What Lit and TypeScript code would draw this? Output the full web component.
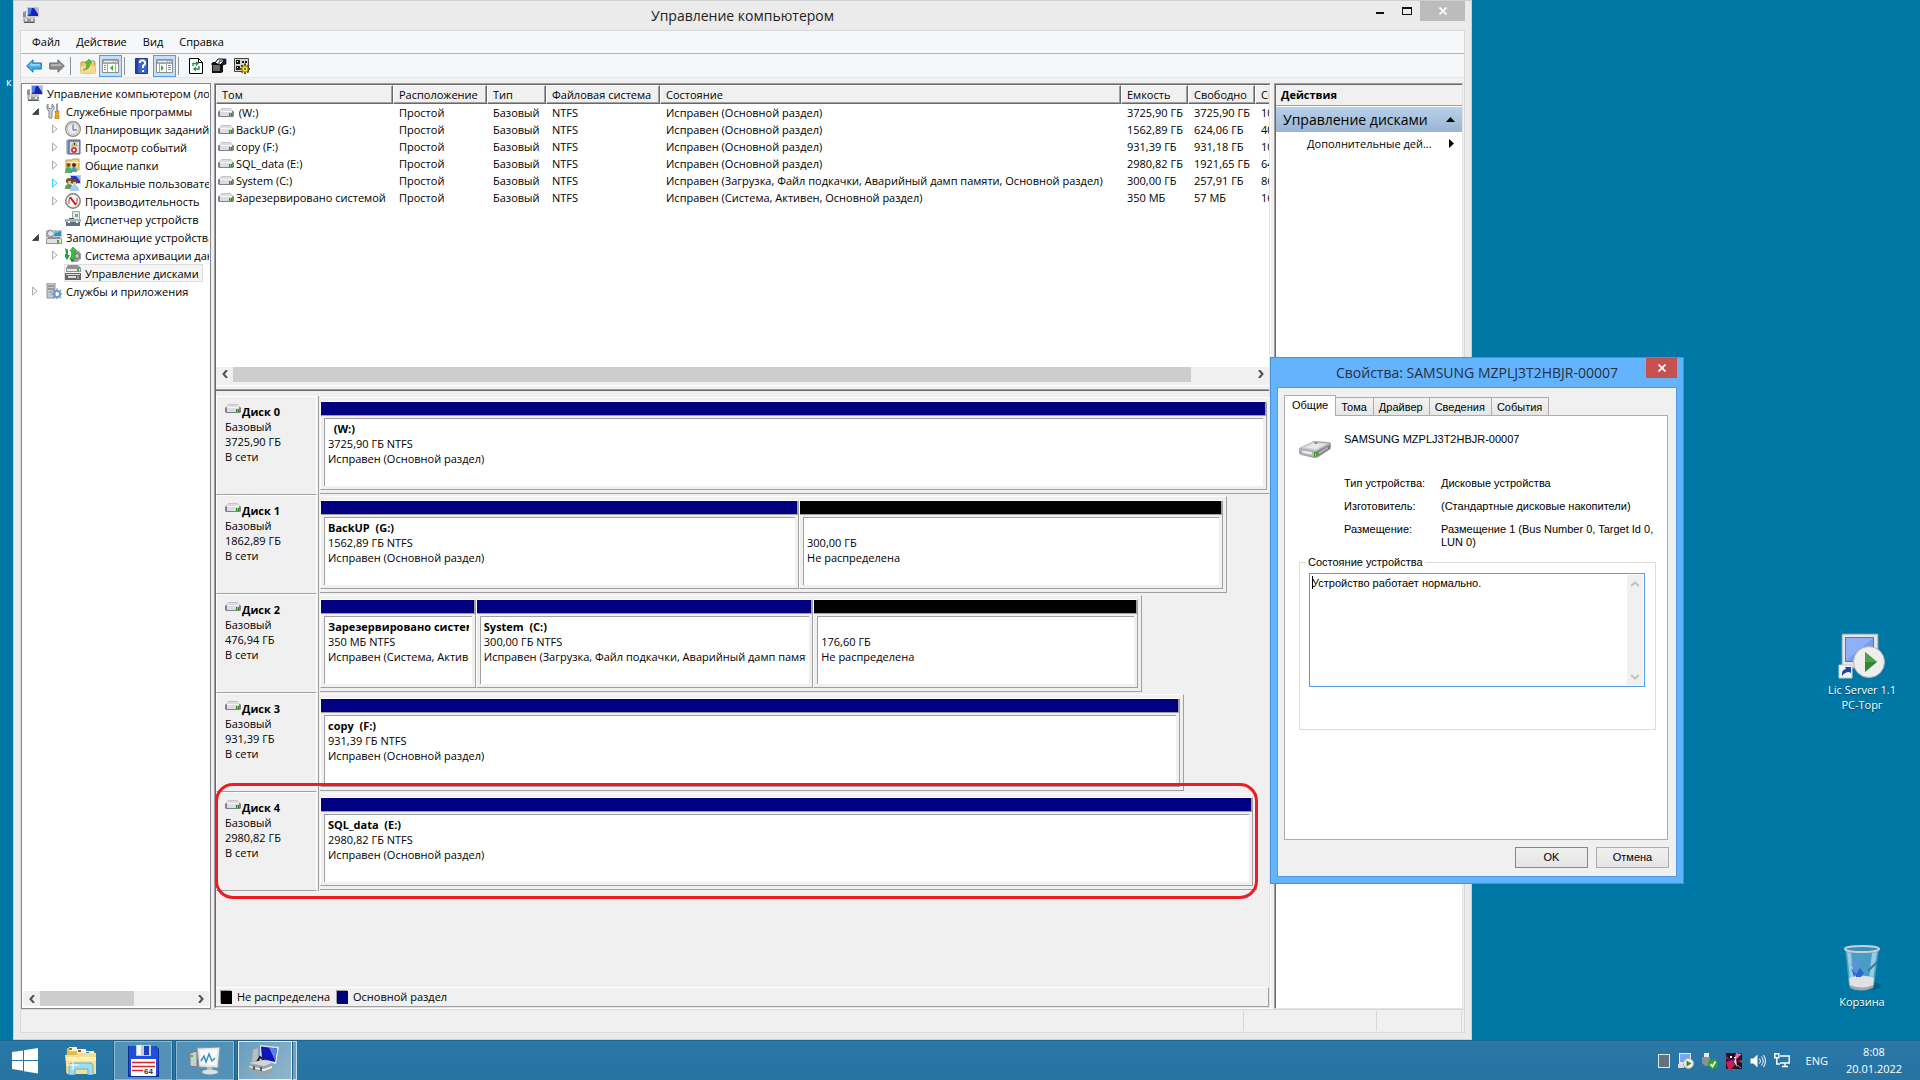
import { LitElement, html, css, TemplateResult } from "lit";
import { customElement, property } from "lit/decorators.js";

const UI_FONT = css`"Open Sans", "Noto Sans", sans-serif`;

const base = css`
  * { box-sizing: border-box; }
  button, textarea { font: inherit; color: inherit; margin: 0; padding: 0; border: 0; background: none; border-radius: 0; }
  ul, ol, dl, dd, h1, h2, p { margin: 0; padding: 0; list-style: none; font-weight: normal; font-size: inherit; }
  svg { display: block; flex: none; }
`;

/* ---------- tree and list icons ---------- */
const iComputer = html`<svg width="16" height="16" viewBox="0 0 16 16"><path d="M4 0h12v10H4z" fill="#c9c9c0"/><path d="M5 1h10v8H5z" fill="#1822b8"/><path d="M5 1h4L7 9H5z" fill="#4f7be8"/><path d="M11 1h4v6z" fill="#a9b8f4"/><path d="M0 5l3-1v7H0z" fill="#8b9096"/><path d="M1 6h1v1H1z" fill="#5fd13c"/><path d="M4 9l3-2 2 2z" fill="#3b3f45"/><path d="M0 10h12v6H1z" fill="#8e979e"/><path d="M0 10h12v2H0z" fill="#bfc6ca"/><path d="M2 12h2v2H2zM8 12h2v2H8z" fill="#e9ecee"/><path d="M1 15h10v1H1z" fill="#565d63"/></svg>`;
const iTools = html`<svg width="16" height="16" viewBox="0 0 16 16"><path d="M2 1v4l2 1 2-1V1l2 2v3L6 8v7H3V8L1 6V3z" fill="#d3d6d9" stroke="#7f868c"/><path d="M10 1l2-1v8h-2z" fill="#9aa0a6"/><path d="M9 8h4v2l-1 1 1 1v4H9v-4l1-1-1-1z" fill="#f0a31c" stroke="#b8730a" stroke-width=".6"/></svg>`;
const iClock = html`<svg width="16" height="16" viewBox="0 0 16 16"><circle cx="8" cy="8" r="7.4" fill="#e9e4d8" stroke="#8e8d88" stroke-width="1.2"/><circle cx="8" cy="8" r="5.6" fill="#e3ecf8" stroke="#c7c1ae"/><path d="M8 3.5V9h4" fill="none" stroke="#4b5f86"/></svg>`;
const iEvents = html`<svg width="16" height="16" viewBox="0 0 16 16"><path d="M3 1h12v14H3z" fill="#6f8fc4" stroke="#4a669b"/><path d="M5 3h9v11H5z" fill="#d7dfee"/><path d="M1 2h3M1 4h3M1 6h3M1 8h3M1 10h3M1 12h3M1 14h3" stroke="#7d8795"/><path d="M9.500 2l3 5h-6z" fill="#f7c52b" stroke="#b28410" stroke-width=".5"/><path d="M9.500 4v2" stroke="#333"/><circle cx="9" cy="11" r="3" fill="#da3a35"/><path d="M8 10l2 2m0-2l-2 2" stroke="#fff"/></svg>`;
const iFolders = html`<svg width="16" height="16" viewBox="0 0 16 16"><path d="M1 3h6l1-1h6v11H1z" fill="#f0d37c" stroke="#c19c3f"/><path d="M2 5h12v1H2z" fill="#fdf2c2"/><path d="M0 16q0-6 3.500-6T7 16z" fill="#4fb06b"/><circle cx="3.500" cy="8" r="2" fill="#7d4d25"/><path d="M6 15q0-5 3-5t3 5z" fill="#4c9fc4"/><circle cx="9" cy="8" r="2" fill="#3d3430"/></svg>`;
const iUsers = html`<svg width="16" height="16" viewBox="0 0 16 16"><path d="M5 0h11v9H5z" fill="#c9ccd0"/><path d="M6 1h9v7H6z" fill="#2337c8"/><path d="M11 1h4v5z" fill="#98b0f2"/><circle cx="4" cy="6" r="3" fill="#7b5430"/><path d="M3 6h3v3H3z" fill="#e8b98c"/><circle cx="9.500" cy="6.500" r="2.800" fill="#6b4a2e"/><path d="M8 7h3v3H8z" fill="#edc39a"/><path d="M0 14q0-5 4-5t4 5z" fill="#58a05a"/><path d="M5 16q0-6 4.500-6T14 16z" fill="#a9c9ec"/></svg>`;
const iPerf = html`<svg width="16" height="16" viewBox="0 0 16 16"><circle cx="8" cy="8" r="7.200" fill="#f4f4f4" stroke="#7f8183" stroke-width="1.500"/><path d="M4 11V6l2-2M12 5v5l-2 2" stroke="#c5393a" fill="none"/><path d="M5 4l6 8" stroke="#d2191b" stroke-width="2"/></svg>`;
const iDevice = html`<svg width="16" height="16" viewBox="0 0 16 16"><path d="M7.500.500h7v9h-7z" fill="#e6e8ea" stroke="#9ea4aa"/><path d="M10 3h3v3h-3z" fill="#79ad6d"/><path d="M0 8h16v3H0z" fill="#a9b0b6"/><path d="M1 11h14v4H1z" fill="#5d7382"/><path d="M4 7h5v1H4z" fill="#525a60"/><path d="M3 10h2v2H3zM11 10h2v2h-2z" fill="#eef1f3"/></svg>`;
const iStorage = html`<svg width="16" height="16" viewBox="0 0 16 16"><path d="M0 2q4-3 8 0v6H0z" fill="#a7a9ac"/><circle cx="4.500" cy="4.500" r="3" fill="#e6e7e9" stroke="#8b8e92"/><path d="M7 1h9v7H7z" fill="#c4c7ca"/><path d="M8 2h7v5H8z" fill="#2b93c5"/><path d="M8 2h7L8 5z" fill="#6cc3e8"/><path d="M0 10l2-2h12l2 2v5H0z" fill="#8f9194"/><path d="M1 10h14v4H1z" fill="#dfe0e2"/><path d="M11 11h2v3h-2z" fill="#39b01c"/></svg>`;
const iBackup = html`<svg width="16" height="16" viewBox="0 0 16 16"><path d="M6 4h8l2 3v5l-4 3H6z" fill="#9b9ea2"/><circle cx="12" cy="9" r="2.500" fill="#d7c4ba" stroke="#666"/><path d="M0 1l3 2v5h2l-3 5-2-3V7h1z" fill="#25a433"/><path d="M8 0l4 4h-2v6l-2 4-3-3 2-2V4H5z" fill="#3cc33e" stroke="#1b7d29" stroke-width=".5"/><path d="M4 11l3 4 3-2" fill="#3b7c49"/></svg>`;
const iDiskMgmt = html`<svg width="16" height="16" viewBox="0 0 16 16"><path d="M3 0h10l3 3v4H1V3z" fill="#8f9295"/><path d="M2 4h13v2H2z" fill="#e6e6e2"/><path d="M12 4h2v2h-2z" fill="#37b01f"/><path d="M0 8h16v7H0z" fill="#63676b"/><path d="M1 9h14v1H1z" fill="#d5d8da"/><path d="M3 11h8v2H3z" fill="#d9dbdd"/><path d="M12 11h2v3h-2z" fill="#97999b"/></svg>`;
const iServices = html`<svg width="16" height="16" viewBox="0 0 16 16"><path d="M1 0h8v15H1z" fill="#c4c9cf" stroke="#8d949c"/><path d="M2 3h6M2 6h6" stroke="#646d77"/><path d="M3 9h3" stroke="#52b34c"/><circle cx="11" cy="11" r="3" fill="none" stroke="#6d9ccb" stroke-width="2"/><path d="M11 5.500v2m0 7v2M5.500 11h2m7 0h2M7 7l1.500 1.500m5 5L15 15M15 7l-1.500 1.500M7 15l1.500-1.500" stroke="#6d9ccb" stroke-width="1.500"/></svg>`;
const iDrive = html`<svg width="16" height="10" viewBox="0 0 16 10"><path d="M2 1h12l2 3H0z" fill="#dcdcdf"/><path d="M3 0h10v1H3z" fill="#c4c4c8"/><path d="M0 4l1-1h14l1 1v4l-1 1H1L0 8z" fill="#808287"/><path d="M2 4h12v4H2z" fill="#dcdce8"/><path d="M2 3h12v1H2z" fill="#f7f7f9"/><path d="M11 5h3v3h-3z" fill="#2f8a1b"/><path d="M12 5h1v3h-1z" fill="#5fe03a"/></svg>`;

/* ---------- tool bar icons ---------- */
const tBack = html`<svg width="16" height="14" viewBox="0 0 16 14"><path d="M.700 7L7 .8V4h8.300v6H7v3.200z" fill="#42b0ea" stroke="#1f6fae"/><path d="M3 7l3-3.500V5h8v1.500z" fill="#8fd8fb"/></svg>`;
const tFwd = html`<svg width="16" height="14" viewBox="0 0 16 14"><path d="M15.300 7L9 .8V4H.700v6H9v3.200z" fill="#8d8d8d" stroke="#6a6a6a"/><path d="M2 5h8V3.500L13 7H2z" fill="#b3b3b3"/></svg>`;
const tUp = html`<svg width="16" height="16" viewBox="0 0 16 16"><path d="M1 4h6l1-1h6l1 1v11H1z" fill="#ecc66a" stroke="#c19a41"/><path d="M9 4h4v1H9z" fill="#fff"/><path d="M1 8h14v7H1z" fill="#f5d98d"/><path d="M3 12q4-1 4-7H5l4-4 3 4h-2q0 7-7 7z" fill="#55c13b" stroke="#3a8f28" stroke-width=".5"/></svg>`;
const tPaneL = html`<svg width="17" height="14" viewBox="0 0 17 14"><path d="M.500.500h16v13H.500z" fill="#fff" stroke="#8d9093"/><path d="M1 1h15v3H1z" fill="#a9acaf"/><path d="M2 2.500h9M12 2.500h1M14 2.500h1" stroke="#f2f2f2"/><path d="M1 4.500h15M5.500 5v8M13.500 5v8" stroke="#a4a7aa"/><path d="M2 6.500h2M2 8.500h2M2 10.500h2" stroke="#6d9bd0"/><path d="M11 6v6L8 9z" fill="#43b02a"/></svg>`;
const tPaneR = html`<svg width="17" height="14" viewBox="0 0 17 14"><path d="M.500.500h16v13H.500z" fill="#fff" stroke="#8d9093"/><path d="M1 1h15v3H1z" fill="#a9acaf"/><path d="M2 2.500h9M12 2.500h1M14 2.500h1" stroke="#f2f2f2"/><path d="M1 4.500h15M3.500 5v8M10.500 5v8" stroke="#a4a7aa"/><path d="M12 6.500h3M12 8.500h3M12 10.500h3" stroke="#8b8e91"/><path d="M5 6v6l3-3z" fill="#43b02a"/></svg>`;
const tHelp = html`<svg width="14" height="16" viewBox="0 0 14 16"><path d="M.500.500h12v15H.500z" fill="#3d62c8" stroke="#1e3a8f"/><path d="M1 1h2v14H1z" fill="#24429f"/><path d="M5 5V3.500L6.500 2.500h2L10 4v2L8 8v2" fill="none" stroke="#fff" stroke-width="2"/><path d="M7 12h2v2H7z" fill="#fff"/></svg>`;
const tRefresh = html`<svg width="14" height="16" viewBox="0 0 14 16"><path d="M.500.500h9l4 4v11H.500z" fill="#fff" stroke="#000"/><path d="M9.500.500v4h4" fill="none" stroke="#000"/><path d="M4 8V5.500h4M10 8v3H6" fill="none" stroke="#169a3a" stroke-width="1.400"/><path d="M7 3l3 2.500L7 8zM7 8.500L4 11l3 2.500z" fill="#169a3a"/></svg>`;
const tProps = html`<svg width="16" height="16" viewBox="0 0 16 16"><path d="M0 6l2-2h9l1 2v8l-2 1H1V7z" fill="#111"/><path d="M2 8h7M2 10h7M2 12h7" stroke="#e9e9e9" stroke-width=".8"/><path d="M4 5l3-4h5l1 2-4 4z" fill="#fff" stroke="#000"/><path d="M12 1h3v5l-3 1z" fill="#20264e" stroke="#000" stroke-width=".6"/><path d="M8 3h3M7 5h2" stroke="#000"/></svg>`;
const tSettings = html`<svg width="16" height="16" viewBox="0 0 16 16"><path d="M.500.500h14v13H.500z" fill="#d5d5cf" stroke="#444"/><path d="M2 2h4v4H2zM2 8h4v4H2zM8 3h2v2H8zM11 3h2v2h-2zM7 7h2v2H7z" fill="#1d1d1d"/><path d="M3 3h1v1H3zM3 9h1v1H3z" fill="#fff"/><path d="M11 5.500v11M5.500 11h11M7.500 7.500l7 7M14.500 7.500l-7 7" stroke="#5c5200" stroke-width="2"/><circle cx="11" cy="11" r="3" fill="#f5e92c" stroke="#a89800"/><circle cx="11" cy="11" r="1" fill="#444"/></svg>`;

const chevL = html`<svg width="6" height="8" viewBox="0 0 6 8"><path d="M5 0L1.500 4 5 8" fill="none" stroke="#505050" stroke-width="2"/></svg>`;
const chevR = html`<svg width="6" height="8" viewBox="0 0 6 8"><path d="M1 0l3.500 4L1 8" fill="none" stroke="#505050" stroke-width="2"/></svg>`;

const triOpen = html`<svg width="7" height="7" viewBox="0 0 7 7"><path d="M6.500.500v6h-6z" fill="#404040" stroke="#1c1c1c" stroke-width=".6"/></svg>`;
const triShut = (hot: boolean) => html`<svg width="6" height="10" viewBox="0 0 6 10"><path d="M.600 1l4.300 4L.600 9z" fill="#fff" stroke="${hot ? "#27c7f7" : "#a5a5a5"}"/></svg>`;

/* ---------- data ---------- */
const volumes = [
  [" (W:)", "Исправен (Основной раздел)", "3725,90 ГБ", "3725,90 ГБ", "100 %"],
  ["BackUP (G:)", "Исправен (Основной раздел)", "1562,89 ГБ", "624,06 ГБ", "40 %"],
  ["copy (F:)", "Исправен (Основной раздел)", "931,39 ГБ", "931,18 ГБ", "100 %"],
  ["SQL_data (E:)", "Исправен (Основной раздел)", "2980,82 ГБ", "1921,65 ГБ", "64 %"],
  ["System (C:)", "Исправен (Загрузка, Файл подкачки, Аварийный дамп памяти, Основной раздел)", "300,00 ГБ", "257,91 ГБ", "86 %"],
  ["Зарезервировано системой", "Исправен (Система, Активен, Основной раздел)", "350 МБ", "57 МБ", "16 %"],
];
const columns: [string, number][] = [["Том", 177], ["Расположение", 94], ["Тип", 59], ["Файловая система", 114], ["Состояние", 461], ["Емкость", 67], ["Свободно", 67], ["Свободно %", 80]];

interface Part { name: string; size: string; state: string; share: number; free?: boolean; }
interface Disk { name: string; size: string; extent: number; parts: Part[]; marked?: boolean; }
const OK_STATE = "Исправен (Основной раздел)";
const disks: Disk[] = [
  { name: "Диск 0", size: "3725,90 ГБ", extent: 100, parts: [{ name: "  (W:)", size: "3725,90 ГБ NTFS", state: OK_STATE, share: 1 }] },
  { name: "Диск 1", size: "1862,89 ГБ", extent: 95.5, parts: [
    { name: "BackUP  (G:)", size: "1562,89 ГБ NTFS", state: OK_STATE, share: 479 },
    { name: "", size: "300,00 ГБ", state: "Не распределена", share: 424, free: true }] },
  { name: "Диск 2", size: "476,94 ГБ", extent: 86.5, parts: [
    { name: "Зарезервировано системой", size: "350 МБ NTFS", state: "Исправен (Система, Активен, Основной раздел)", share: 155 },
    { name: "System  (C:)", size: "300,00 ГБ NTFS", state: "Исправен (Загрузка, Файл подкачки, Аварийный дамп памяти, Основной раздел)", share: 338 },
    { name: "", size: "176,60 ГБ", state: "Не распределена", share: 325, free: true }] },
  { name: "Диск 3", size: "931,39 ГБ", extent: 90.9, parts: [{ name: "copy  (F:)", size: "931,39 ГБ NTFS", state: OK_STATE, share: 1 }] },
  { name: "Диск 4", size: "2980,82 ГБ", extent: 98.6, marked: true, parts: [{ name: "SQL_data  (E:)", size: "2980,82 ГБ NTFS", state: OK_STATE, share: 1 }] },
];

interface Node { text: string; icon: TemplateResult; level: number; mark?: "open" | "shut" | "hot"; selected?: boolean; }
const tree: Node[] = [
  { text: "Управление компьютером (локальным)", icon: iComputer, level: 0 },
  { text: "Служебные программы", icon: iTools, level: 1, mark: "open" },
  { text: "Планировщик заданий", icon: iClock, level: 2, mark: "shut" },
  { text: "Просмотр событий", icon: iEvents, level: 2, mark: "shut" },
  { text: "Общие папки", icon: iFolders, level: 2, mark: "shut" },
  { text: "Локальные пользователи", icon: iUsers, level: 2, mark: "hot" },
  { text: "Производительность", icon: iPerf, level: 2, mark: "shut" },
  { text: "Диспетчер устройств", icon: iDevice, level: 2 },
  { text: "Запоминающие устройства", icon: iStorage, level: 1, mark: "open" },
  { text: "Система архивации данных", icon: iBackup, level: 2, mark: "shut" },
  { text: "Управление дисками", icon: iDiskMgmt, level: 2, selected: true },
  { text: "Службы и приложения", icon: iServices, level: 1, mark: "shut" },
];

/* ---------- horizontal scroll bar ---------- */
@customElement("h-scroll")
export class HScroll extends LitElement {
  @property({ type: Number }) size = 50;
  static styles = [base, css`
    :host { display: flex; flex: none; height: 15px; background: #f0f0f0; }
    button { width: 17px; display: grid; place-items: center; }
    .track { flex: 1; }
    .thumb { height: 100%; background: #cdcdcd; }
  `];
  render() {
    return html`<button aria-label="Прокрутить влево">${chevL}</button>
      <div class="track"><div class="thumb" style="width:${this.size}%"></div></div>
      <button aria-label="Прокрутить вправо">${chevR}</button>`;
  }
}

/* ---------- one disk with its partitions ---------- */
@customElement("disk-row")
export class DiskRow extends LitElement {
  @property({ attribute: false }) disk!: Disk;
  static styles = [base, css`
    :host { display: grid; grid-template-columns: 103px minmax(0, 1fr); position: relative; line-height: 15px; }
    .label { border: 1px solid #fff; border-bottom-color: #a0a0a0; padding: 7px 8px 0; margin-right: 1px; }
    .side { border-right: 1px solid #a0a0a0; display: grid; }
    .name { display: flex; align-items: flex-start; font-weight: bold; gap: 1px; }
    .graph { margin: 1px 0 1px 1px; border: 1px solid #a0a0a0; border-top-color: #fff; border-left: 0; padding: 3px 3px 3px 0; display: flex; }
    .graph.full { border-right-color: #f0f0f0; padding-right: 2px; }
    .part { flex-basis: 0; min-width: 0; border: 1px solid #a0a0a0; border-top-color: #fff; border-left-color: #fff; }
    .bar { height: 14px; background: #000080; border-bottom: 1px solid #a0a0a0; border-right: 1px solid #a0a0a0; }
    .free .bar { background: #000; }
    .body { padding: 2px 3px 3px; }
    .box { height: 68px; padding: 2px 3px 0; background: #fff; border-left: 1px solid #a0a0a0; border-top: 1px solid #a0a0a0; overflow: hidden; white-space: pre; }
    .box p { overflow: hidden; height: 15px; }
    .box .title { font-weight: bold; }
    .mark { position: absolute; left: -1px; top: -9px; right: 11px; bottom: -8px; border: 3px solid #ed1c24; border-radius: 18px; z-index: 2; pointer-events: none; }
  `];
  render() {
    const d = this.disk;
    return html`
      <div class="side"><div class="label">
        <div class="name">${iDrive}<span>${d.name}</span></div>
        <p>Базовый</p><p>${d.size}</p><p>В сети</p>
      </div></div>
      <div class="graph ${d.extent === 100 ? "full" : ""}" style="width:${d.extent}%">
        ${d.parts.map(p => html`<div class="part ${p.free ? "free" : ""}" style="flex-grow:${p.share}">
          <div class="bar"></div>
          <div class="body"><div class="box"><p class="title">${p.name}</p><p>${p.size}</p><p>${p.state}</p></div></div>
        </div>`)}
      </div>
      ${d.marked ? html`<div class="mark"></div>` : ""}`;
  }
}

/* ---------- management console window ---------- */
@customElement("console-window")
export class ConsoleWindow extends LitElement {
  static styles = [base, css`
    :host { display: flex; flex-direction: column; background: #ebebeb; border: 1px solid #ccd0d0; padding: 0 6px 6px; }
    .titlebar { display: grid; grid-template-columns: 1fr auto 1fr; height: 29px; }
    .titlebar h1 { font-size: 14px; line-height: 30px; color: #222; }
    .titlebar .icon { padding: 6px 3px; }
    .controls { display: flex; justify-content: flex-end; height: 20px; }
    .controls button { width: 27px; display: grid; place-items: center; }
    .controls .close { width: 45px; background: #bcbcbc; }
    .frame { flex: 1; min-height: 0; border: 1px solid #d9d9d9; background: #f0f0f0; display: flex; flex-direction: column; }
    .menu { display: flex; background: #f5f7f9; height: 23px; padding-left: 3px; border-bottom: 1px solid #b0b4b8; }
    .menu button { padding: 0 8px; line-height: 22px; }
    .tools { display: flex; background: #f5f7f9; height: 24px; padding: 1px 0 0 1px; border-bottom: 1px solid #e3e6ea; }
    .tools button { width: 23px; height: 22px; display: grid; place-items: center; }
    .tools button.on { background: #c4e0f9; border: 1px solid #569de5; }
    .sep { width: 1px; height: 18px; margin: 2px 5px 0 2px; background: #8c9196; }
    .panes { flex: 1; min-height: 0; display: grid; grid-template-columns: 190px minmax(0, 1fr) 189px; gap: 3px; padding: 5px 1px 0 0; }
    .tree { border: 1px solid #828790; background: #fff; display: flex; flex-direction: column; padding: 0 1px 2px; min-width: 0; }
    .tree ul { flex: 1; overflow: hidden; }
    .node { display: flex; align-items: center; height: 18px; white-space: nowrap; }
    .l0 { padding-left: 3px; } .l1 { padding-left: 9px; } .l2 { padding-left: 29px; }
    .arrow { width: 13px; flex: none; display: grid; }
    .l2 .arrow { width: 12px; }
    .cap { display: flex; align-items: center; gap: 4px; height: 18px; padding-right: 3px; border: 1px solid transparent; padding-left: 0; }
    .cap.sel { border-color: #dedede; background: #f5f5f5; }
    .mid { border: 1px solid #a0a0a0; border-right-color: #fff; border-bottom-color: #fff; display: flex; flex-direction: column; min-width: 0; }
    .inner { flex: 1; min-height: 0; display: flex; flex-direction: column; border-left: 1px solid #696969; border-top: 1px solid #696969; border-right: 1px solid #e3e3e3; border-bottom: 1px solid #e3e3e3; }
    .list { flex: 300 1 0; min-height: 0; display: flex; flex-direction: column; background: #f0f0f0; padding-bottom: 3px; }
    .rows { flex: 1; background: #fff; overflow: hidden; }
    table { border-collapse: separate; border-spacing: 0; table-layout: fixed; width: 1119px; white-space: nowrap; }
    th { font-weight: normal; text-align: left; padding: 0 0 0 5px; height: 19px; line-height: 16px; background: #f0f0f0; border: 1px solid #fff; border-right-color: #696969; border-bottom-color: #696969; box-shadow: inset -1px -1px #a0a0a0; }
    td { padding: 0 0 0 6px; height: 17px; line-height: 17px; overflow: hidden; }
    td:first-child { padding-left: 2px; }
    .vol { display: flex; align-items: center; gap: 2px; white-space: pre; }
    .split { height: 6px; flex: none; background: #f0f0f0; border-top: 1px solid #fff; border-bottom: 1px solid #696969; box-shadow: inset 0 -1px #a0a0a0; }
    .disks { flex: 598 1 0; min-height: 0; padding-top: 5px; }
    .legend { display: flex; align-items: center; height: 20px; flex: none; padding-left: 5px; gap: 5px; border-top: 1px solid #fff; border-bottom: 1px solid #a0a0a0; border-right: 1px solid #a0a0a0; line-height: 16px; }
    .sw { width: 11px; height: 13px; background: #000; box-shadow: -1px -1px #a0a0a0; }
    .sw.prim { background: #000080; margin-left: 2px; }
    .actions { border: 1px solid #a0a0a0; border-right-color: #e3e3e3; border-bottom-color: #e3e3e3; box-shadow: inset 1px 1px #696969; background: #fff; padding: 1px 0 0 1px; min-width: 0; }
    .actions h2 { font-weight: bold; background: #f0f0f0; line-height: 20px; height: 21px; padding: 0 5px; border-bottom: 1px solid #a0a0a0; }
    .group { display: flex; width: 100%; align-items: center; justify-content: space-between; height: 25px; margin-top: 1px; padding: 0 7px; background: linear-gradient(#b9d1ea, #99b4d3); font-size: 14px; }
    .more { display: flex; width: 100%; align-items: center; justify-content: space-between; height: 23px; padding: 0 8px 0 31px; white-space: nowrap; }
    .status { height: 23px; border-top: 1px solid #d7d7d7; display: flex; justify-content: flex-end; padding: 1px 2px; }
    .status span { border-right: 1px solid #d7d7d7; }
    .s1 { flex: 1; } .s2 { width: 133px; } .s3 { width: 85px; }
  `];
  render() {
    return html`
      <header class="titlebar">
        <span class="icon">${iComputer}</span>
        <h1>Управление компьютером</h1>
        <div class="controls">
          <button aria-label="Свернуть"><svg width="8" height="8" viewBox="0 0 8 8"><path d="M0 5h8v2H0z" fill="#111"/></svg></button>
          <button aria-label="Развернуть"><svg width="10" height="8" viewBox="0 0 10 8"><path d="M0 0h10v8H0zM1 2v5h8V2z" fill="#111" fill-rule="evenodd"/></svg></button>
          <button class="close" aria-label="Закрыть"><svg width="8" height="8" viewBox="0 0 8 8"><path d="M.500.500l7 7m0-7l-7 7" stroke="#fff" stroke-width="1.700"/></svg></button>
        </div>
      </header>
      <div class="frame">
        <nav class="menu">${["Файл", "Действие", "Вид", "Справка"].map(t => html`<button>${t}</button>`)}</nav>
        <div class="tools">
          <button aria-label="Назад">${tBack}</button><button aria-label="Вперед">${tFwd}</button><span class="sep"></span>
          <button aria-label="Вверх">${tUp}</button><button class="on" aria-label="Дерево консоли">${tPaneL}</button><span class="sep"></span>
          <button aria-label="Справка">${tHelp}</button><button class="on" aria-label="Панель действий">${tPaneR}</button><span class="sep"></span>
          <button aria-label="Обновить">${tRefresh}</button><button aria-label="Свойства">${tProps}</button><button aria-label="Параметры">${tSettings}</button>
        </div>
        <div class="panes">
          <div class="tree">
            <ul>${tree.map(n => html`<li class="node l${n.level}">
              ${n.level ? html`<span class="arrow">${n.mark === "open" ? triOpen : n.mark ? triShut(n.mark === "hot") : ""}</span>` : ""}
              <span class="cap ${n.selected ? "sel" : ""}">${n.icon}<span>${n.text}</span></span></li>`)}</ul>
            <h-scroll size="62"></h-scroll>
          </div>
          <div class="mid"><div class="inner">
            <div class="list">
              <div class="rows"><table>
                <colgroup>${columns.map(c => html`<col style="width:${c[1]}px">`)}</colgroup>
                <thead><tr>${columns.map(c => html`<th scope="col">${c[0]}</th>`)}</tr></thead>
                <tbody>${volumes.map(v => html`<tr><td><span class="vol">${iDrive}<span>${v[0]}</span></span></td><td>Простой</td><td>Базовый</td><td>NTFS</td>${v.slice(1).map(x => html`<td>${x}</td>`)}</tr>`)}</tbody>
              </table></div>
              <h-scroll size="94"></h-scroll>
            </div>
            <div class="split"></div>
            <div class="disks">${disks.map(d => html`<disk-row .disk=${d}></disk-row>`)}</div>
            <div class="legend"><span class="sw"></span><span>Не распределена</span><span class="sw prim"></span><span>Основной раздел</span></div>
          </div></div>
          <aside class="actions">
            <h2>Действия</h2>
            <button class="group"><span>Управление дисками</span><svg width="9" height="5" viewBox="0 0 9 5"><path d="M4.500 0L9 5H0z"/></svg></button>
            <button class="more"><span>Дополнительные дей...</span><svg width="5" height="9" viewBox="0 0 5 9"><path d="M0 0l5 4.500L0 9z"/></svg></button>
          </aside>
        </div>
        <footer class="status"><span class="s1"></span><span class="s2"></span><span class="s3"></span></footer>
      </div>`;
  }
}

/* ---------- device properties dialog ---------- */
@customElement("device-dialog")
export class DeviceDialog extends LitElement {
  static styles = [base, css`
    :host { display: flex; flex-direction: column; background: #64b3fd; border: 1px solid #4a90d6; padding: 0 6px 6px; font: 11px/13px "Liberation Sans", sans-serif; }
    .bar { display: grid; grid-template-columns: 31px 1fr 31px; height: 29px; }
    .bar h1 { font: 14px/29px ${UI_FONT}; color: #24303c; text-align: center; grid-column: 2; white-space: nowrap; }
    .close { width: 31px; height: 20px; background: #c75050; display: grid; place-items: center; }
    .body { flex: 1; border: 1px solid #4f9ae3; background: #f0f0f0; padding: 7px 8px 8px 6px; display: flex; flex-direction: column; }
    .tabs { display: flex; align-items: flex-end; height: 20px; }
    .tabs button { height: 18px; border: 1px solid #acacac; border-left: 0; border-bottom: 0; background: linear-gradient(#f2f2f2, #e6e6e6); padding: 2px 6px 0 5px; }
    .tabs .on { height: 21px; margin-bottom: -1px; background: #fff; border-left: 1px solid #acacac; position: relative; padding: 0 7px 2px; }
    .page { flex: 1; background: #fff; border: 1px solid #acacac; padding: 17px 11px 12px 14px; }
    .head { display: grid; grid-template-columns: 45px 1fr; min-height: 44px; }
    .head svg { margin-top: 8px; }
    dl { display: grid; grid-template-columns: 97px 1fr; row-gap: 10px; padding-left: 45px; }
    fieldset { margin: 7px 0 0; border: 1px solid #dcdcdc; padding: 4px 10px 42px 9px; min-width: 0; }
    legend { padding: 0 2px; margin-left: -3px; line-height: 13px; }
    .edit { display: flex; position: relative; border: 1px solid #569de5; padding: 1px; height: 114px; }
    textarea { flex: 1; resize: none; outline: 0; overflow: hidden; padding: 1px 0 0 1px; line-height: 14px; background: #fff; }
    .vs { width: 16px; background: #f0f0f0; display: flex; flex-direction: column; justify-content: space-between; }
    .vs button { height: 17px; display: grid; place-items: center; }
    .caret { position: absolute; left: 2px; top: 2px; width: 1px; height: 13px; background: #000; }
    .foot { display: flex; justify-content: flex-end; gap: 8px; padding-top: 7px; margin-right: -1px; }
    .foot button { width: 73px; height: 21px; border: 1px solid #acacac; background: linear-gradient(#f0f0f0, #e5e5e5); }
    .foot .def { border-color: #3399ff; }
  `];
  render() {
    return html`
      <header class="bar"><h1>Свойства: SAMSUNG MZPLJ3T2HBJR-00007</h1>
        <button class="close" aria-label="Закрыть"><svg width="8" height="8" viewBox="0 0 8 8"><path d="M.500.500l7 7m0-7l-7 7" stroke="#fff" stroke-width="1.700"/></svg></button></header>
      <div class="body">
        <div class="tabs" role="tablist">
          <button class="on" role="tab" aria-selected="true">Общие</button>${["Тома", "Драйвер", "Сведения", "События"].map(t => html`<button role="tab" aria-selected="false">${t}</button>`)}
        </div>
        <div class="page" role="tabpanel">
          <div class="head">
            <svg width="32" height="18" viewBox="0 0 32 18"><path d="M0 8q0-1 2-2L13 1q1-1 3-1l13 1q3 0 3 2v4q0 1-2 2L18 17H15L2 14q-2-1-2-2z" fill="#a3a5a8"/><path d="M1 7L14 1l16 1.500L17 10z" fill="#cfd0d2"/><path d="M6 6.500L15 2l12 1-10 5z" fill="#e6e7e8"/><path d="M1 8l16 2.500V16L2 13z" fill="#b4b4bb"/><path d="M3 9.500l10 1.500v2.500L4 12z" fill="#ececf5"/><path d="M17.500 10.500L31 4v4l-13 8z" fill="#808286"/><path d="M20 11l9-5v1.500L20 13z" fill="#b9bbbd"/><path d="M15 11h3v4l-3 1z" fill="#2f9a18"/><path d="M16 12h1v3h-1z" fill="#7bec58"/><ellipse cx="17" cy="2" rx="2" ry="1" fill="#8b8d90"/></svg>
            <span>SAMSUNG MZPLJ3T2HBJR-00007</span>
          </div>
          <dl><dt>Тип устройства:</dt><dd>Дисковые устройства</dd>
            <dt>Изготовитель:</dt><dd>(Стандартные дисковые накопители)</dd>
            <dt>Размещение:</dt><dd>Размещение 1 (Bus Number 0, Target Id 0, LUN 0)</dd></dl>
          <fieldset><legend><label for="state">Состояние устройства</label></legend>
            <div class="edit"><textarea id="state" readonly .value=${"Устройство работает нормально."}></textarea><span class="caret"></span>
              <div class="vs">
                <button aria-label="Вверх"><svg width="8" height="6" viewBox="0 0 8 6"><path d="M0 5l4-3.500L8 5" fill="none" stroke="#bfbfbf" stroke-width="2"/></svg></button>
                <button aria-label="Вниз"><svg width="8" height="6" viewBox="0 0 8 6"><path d="M0 1l4 3.500L8 1" fill="none" stroke="#bfbfbf" stroke-width="2"/></svg></button>
              </div></div>
          </fieldset>
        </div>
        <div class="foot"><button class="def">OK</button><button>Отмена</button></div>
      </div>`;
  }
}

/* ---------- task bar ---------- */
@customElement("task-bar")
export class TaskBar extends LitElement {
  static styles = [base, css`
    :host { display: flex; height: 40px; background: linear-gradient(#2878a8, #2773a2); border-top: 1px solid #1f6590; color: #fff; }
    button { display: grid; place-items: center; }
    .start { width: 50px; }
    .pin { width: 62px; margin-right: 2px; }
    .app { width: 58px; height: 39px; border: 1px solid #8db9d3; background: #5391b6; margin-right: 4px; box-shadow: 0 0 0 1px #1f5f88; }
    .app.active { width: 54px; border-color: #e3eef5; background: linear-gradient(135deg, #6b9dbc, #8fb6cd); margin-right: 0; }
    .app.active svg { margin-right: 4px; }
    .stack { width: 5px; border: 1px solid #c8dde9; border-left-color: #1f5f88; background: #6fa1c0; height: 39px; }
    .tray { margin-left: auto; display: flex; align-items: center; gap: 8px; }
    .lang { font-size: 11px; padding: 0 6px 0 8px; }
    .clock { width: 80px; margin-right: 6px; text-align: center; font-size: 11px; line-height: 17px; padding-top: 2px; }
  `];
  render() {
    return html`
      <button class="start" aria-label="Пуск"><svg width="26" height="26" viewBox="0 0 26 26"><path d="M0 4l11-1.600V12H0zM12 2.200L26 0v12H12zM0 13h11v9.800L0 21zM12 13h14v12.500L12 23.200z" fill="#fff"/></svg></button>
      <button class="pin" aria-label="Проводник"><svg width="32" height="28" viewBox="0 0 32 28"><path d="M2 1h9l2 3h15l2 2v20H1z" fill="#e4b94e"/><path d="M4 0h8v4H4z" fill="#fff6d6"/><path d="M4 1h3v2H4z" fill="#22a33c"/><path d="M12 2h9v5h-9z" fill="#fff6d6"/><path d="M13 3h3v2h-3z" fill="#dc3b26"/><path d="M20 4h9v5h-9z" fill="#fff6d6"/><path d="M21 5h3v2h-3z" fill="#2a86d8"/><path d="M0 8h12l2-2h17v21H2z" fill="#f8e08a"/><path d="M1 10h30v4H1z" fill="#fff0b3"/><path d="M4 28V19q0-3 3-3h18q3 0 3 3v9h-5v-6H10v6z" fill="#9ddcf2" stroke="#5ab3d6"/><path d="M8 11v12M2 18h12" stroke="#fff"/></svg></button>
      <button class="app" aria-label="Файловый менеджер"><svg width="31" height="32" viewBox="0 0 31 32"><path d="M0 1h28l3 3v28H0z" fill="#0d2c96"/><path d="M1 1h26l3 3v26H1z" fill="#1d4fd8"/><path d="M8 0h15v11H8z" fill="#c7ccd4"/><path d="M9 0h4v10H9z" fill="#f3f4f7"/><path d="M16 1h5v9h-5z" fill="#1a3fb8"/><path d="M3 14h25v17H3z" fill="#fff"/><path d="M4 17.500h23M4 21.500h23M4 25.500h11" stroke="#d8232a" stroke-width="1.300"/><text x="16" y="29" font-family="Liberation Sans" font-size="8" font-weight="bold" fill="#333">64</text></svg></button>
      <button class="app" aria-label="Системный монитор"><svg width="31" height="28" viewBox="0 0 31 28"><path d="M0 6l7-2v16l-7-1z" fill="#cbced1" stroke="#777"/><path d="M1 8h2v2H1z" fill="#41c423"/><path d="M7 1l23-1-2 21-19-1z" fill="#e6e8ea" stroke="#8e9499"/><path d="M10 3l17-1-1 16-15-1z" fill="#fbfcfd"/><path d="M11 14l3-5 2 6 3-8 3 7 3-3" fill="none" stroke="#3b8cc0" stroke-width="1.500"/><path d="M17 20h5v4h-5z" fill="#b9bdc0"/><ellipse cx="20" cy="25" rx="8" ry="2.500" fill="#dcdfe1"/></svg></button>
      <button class="app active" aria-label="Управление компьютером"><svg width="31" height="31" viewBox="0 0 31 31"><path d="M5 5l5-2v12l-6 2z" fill="#b9bec2"/><path d="M12 0l19 2-3 17-16-4z" fill="#dfe2e4"/><path d="M13 1.500l16 2-2 13.500-13-3z" fill="#1016b4"/><path d="M21 2.500l8 1-2 12z" fill="#5b80ea"/><path d="M9 17l3-5 5 4" fill="none" stroke="#222" stroke-width="2"/><path d="M1 18l15-3 8 3v9l-8 4-15-5z" fill="#98a4ab"/><path d="M1 18l15-3 8 3-8 3z" fill="#cfd6da"/><path d="M1 21l15 3 8-3v2l-8 3-15-4z" fill="#eef1f3"/><path d="M5 21h2v4H5zM12 22h2v4h-2z" fill="#555e64"/></svg></button>
      <span class="stack"></span>
      <div class="tray">
        <svg width="12" height="14" viewBox="0 0 12 14"><path d="M0 0h12v14H0z" fill="#dfe6ea"/><path d="M1 1h10v12H1z" fill="#66757e"/><path d="M1 2.500h10M1 4.500h10M1 6.500h10M1 8.500h10M1 10.500h10" stroke="#44708c" stroke-dasharray="1 1"/></svg>
        <svg width="16" height="16" viewBox="0 0 16 16"><path d="M1 0h12v11H1z" fill="#e6e8ea"/><path d="M2 1h10v8H2z" fill="#7ba4ee"/><path d="M0 11h6v4H0z" fill="#d8dadc"/><circle cx="10.500" cy="10.500" r="5" fill="#f1f3ef" stroke="#adb1ab"/><path d="M8.500 7.500l5 3-5 3z" fill="#2f8b33"/></svg>
        <svg width="16" height="16" viewBox="0 0 16 16"><path d="M2 0h5v4H2z" fill="#e8eaeb"/><path d="M0 4h8v6l-2 3H3L0 10z" fill="#8a9196"/><circle cx="11" cy="11" r="5" fill="#29a32c"/><path d="M8.500 11l2 2.500 3-5" fill="none" stroke="#fff" stroke-width="1.700"/></svg>
        <svg width="16" height="16" viewBox="0 0 16 16"><path d="M0 0h16v16H0z" fill="#2a0d22"/><path d="M0 9l6-2 3 5-4 4H2z" fill="#d31f45"/><path d="M10 0l-2 8 8-7z" fill="#f06aa8"/><path d="M0 2l4 5-4-1z" fill="#8c1c50"/><path d="M3 14l4-8 2 2z" fill="#7c2ad0"/><path d="M10 5l1 9-3-5z" fill="#ffd9a0"/><path d="M12 8l4-1v3z" fill="#c73552"/><path d="M4 3h2v2H4zM8 4h2v1H8z" fill="#fff"/><path d="M11 12l4 3" stroke="#3fa8e8"/></svg>
        <svg width="16" height="14" viewBox="0 0 16 14"><path d="M.500 4.500h3l4-4v13l-4-4h-3z" fill="#fff"/><path d="M9.500 4.500q2 2.500 0 5M11.500 2.500q3.500 4.500 0 9M13.500 1q4 6 0 12" fill="none" stroke="#fff"/></svg>
        <svg width="16" height="15" viewBox="0 0 16 15"><path d="M6 3h9.200v7H6M11 10v3M8 13.500h6M.800.800h4v4h-4zM2.800 5v6h3" fill="none" stroke="#fff" stroke-width="1.400"/></svg>
        <span class="lang">ENG</span>
      </div>
      <div class="clock">8:08<br>20.01.2022</div>`;
  }
}

/* ---------- desktop ---------- */
@customElement("app-root")
export class AppRoot extends LitElement {
  static styles = [base, css`
    :host { display: flex; flex-direction: column; height: 100vh; overflow: hidden; background: #0078a5; font: 11px/15px ${UI_FONT}; color: #000; }
    .desk { flex: 1; position: relative; min-height: 0; }
    console-window { position: absolute; left: 13px; right: 448px; top: 0; bottom: 0; }
    device-dialog { position: absolute; left: 1270px; top: 357px; width: 414px; min-height: 527px; z-index: 3; }
    .short { position: absolute; width: 90px; display: flex; flex-direction: column; align-items: center; gap: 2px; color: #fff; text-align: center; text-shadow: 0 1px 1px #00405c; }
    .lic { right: 13px; top: 632px; }
    .bin { right: 13px; top: 944px; }
    .cut { position: absolute; left: 6px; top: 74px; color: #fff; }
  `];
  render() {
    return html`
      <main class="desk">
        <span class="cut">к</span>
        <console-window></console-window>
        <device-dialog role="dialog" aria-label="Свойства"></device-dialog>
        <button class="short lic"><svg width="48" height="48" viewBox="0 0 48 48"><path d="M4 2h36v34H4z" fill="#e3e6e9" stroke="#8b949c"/><path d="M7 5h29v25H7z" fill="#4c79d8"/><path d="M8 6h27v23H8z" fill="#8fb0f6"/><path d="M8 29L35 6v23z" fill="#769cf0"/><circle cx="31" cy="30" r="15.500" fill="#eeeeec" stroke="#b5b5b2"/><path d="M27 20l12 10-12 10z" fill="#2f8735"/><path d="M27 20l12 10H27z" fill="#49a149"/><path d="M1 33h13v13H1z" fill="#f3f6fa" stroke="#c4ccd4"/><path d="M4 44q-1-6 4-7l-1-2h6v6l-2-1q-4 0-7 4z" fill="#20499c"/></svg><span>Lic Server 1.1<br>РС-Торг</span></button>
        <button class="short bin"><svg width="40" height="48" viewBox="0 0 40 48"><ellipse cx="26" cy="42" rx="13" ry="4" fill="#055f86"/><path d="M3 4l4 38q13 7 25 0l5-38z" fill="#4a9dc4"/><path d="M5 8l3 28h4L9 9zM30 9l-3 27h4l4-28z" fill="#9accdf"/><path d="M35 18l-9 9" stroke="#2580ac" stroke-width="2"/><path d="M7 34q13-5 25 0l-1 9q-12 6-23 0z" fill="#dfe1e3"/><path d="M8 41q12 5 23 0v3q-12 5-23 0z" fill="#a3a7ab"/><ellipse cx="20" cy="5" rx="17" ry="3" fill="#3a8fb8" stroke="#c9ced2" stroke-width="2"/><path d="M9 20q5-6 8 1l-3 2q-2-4-3 0z" fill="#6a8de8"/><path d="M9 24l3 8 2-2zM14 30l4-6 4 5-3 4h-5z" fill="#2f62d8"/></svg><span>Корзина</span></button>
      </main>
      <task-bar></task-bar>`;
  }
}
